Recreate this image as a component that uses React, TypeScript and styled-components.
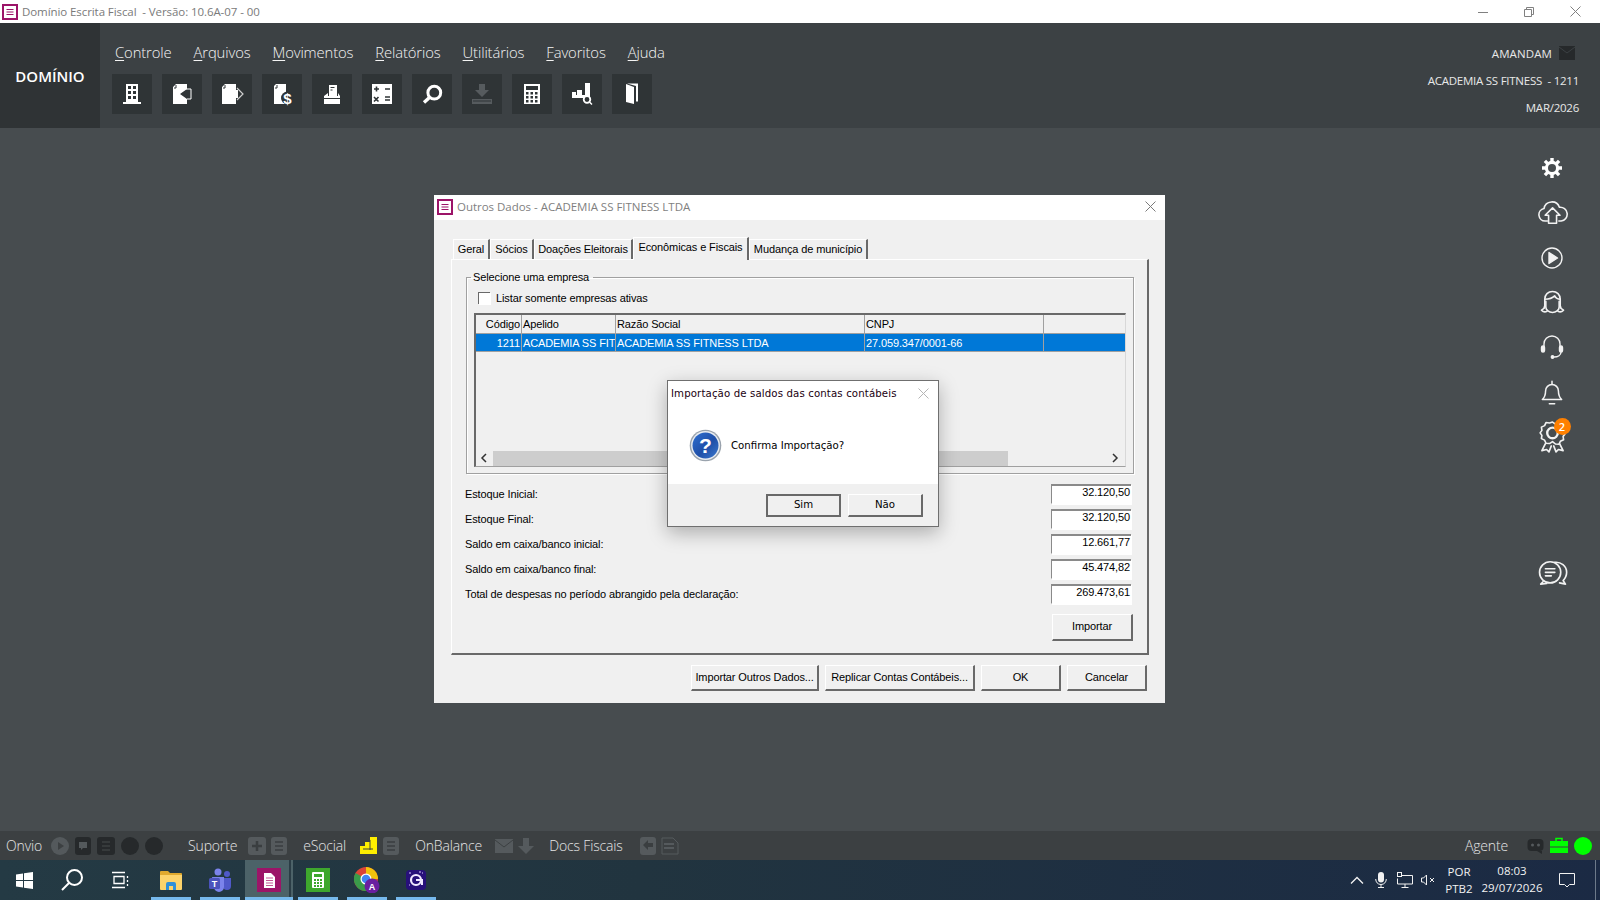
import React from 'react'
import styled, { createGlobalStyle } from 'styled-components'

const GlobalStyle = createGlobalStyle`
  html, body { margin: 0; padding: 0; }
  body { width: 1600px; height: 900px; overflow: hidden; background: #474c4f; font-family: "Open Sans", "Noto Sans", sans-serif; }
  * { box-sizing: border-box; }
`

const Page = styled.div`
  width: 1600px;
  height: 900px;
  display: flex;
  flex-direction: column;
  overflow: hidden;
`

/* app title bar */
const AppTitle = styled.div`
  height: 23px;
  background: #fff;
  display: flex;
  align-items: center;
  padding-left: 1px;
  flex: none;
`
const AppTitleText = styled.span`
  margin-left: 3px;
  font-size: 11.5px;
  color: #7a7a7a;
  white-space: pre;
  font-family: "Open Sans", sans-serif;
  letter-spacing: -0.08px;
`
const WinControls = styled.div`
  margin-left: auto;
  margin-right: 2px;
  display: flex;
  align-items: center;
  height: 21px;
`
const WinControl = styled.div`
  width: 46px;
  display: flex;
  justify-content: center;
  color: #808080;
`

/* dark header */
const Header = styled.header`
  height: 105px;
  flex: none;
  display: flex;
  background: #3c4144;
  color: #f4f4f4;
`
const Brand = styled.div`
  width: 100px;
  background: #2f3335;
  display: flex;
  align-items: center;
  justify-content: center;
  font-family: "Open Sans", sans-serif;
  font-size: 15px;
  font-weight: 600;
  color: #fff;
`
const HeaderMain = styled.div`
  padding: 17px 0 0 12px;
`
const Menu = styled.nav`
  display: flex;
  gap: 22px;
  margin-left: 3px;
  height: 23px;
  align-items: center;
  font-size: 14.8px;
  font-weight: 300;
  letter-spacing: -0.12px;
`
const MenuItem = styled.span`
  & > u { text-underline-offset: 2px; text-decoration-thickness: 1px; }
`
const Toolbar = styled.div`
  display: flex;
  gap: 10px;
  margin-top: 11px;
`
const ToolButton = styled.div`
  width: 40px;
  height: 40px;
  background: #2f3436;
  & > svg { display: block; }
`
const HeaderInfo = styled.div`
  margin-left: auto;
  padding: 16px 21px 0 0;
  display: flex;
  flex-direction: column;
  align-items: flex-end;
  font-size: 11.5px;
  font-weight: 400;
  letter-spacing: -0.25px;
`
const InfoRow = styled.div`
  height: 27px;
  display: flex;
  align-items: center;
  gap: 7px;
  white-space: pre;
  color: #e8e8e8;
`
const UserRow = styled(InfoRow)`
  height: 28px;
  margin-right: 4px;
  letter-spacing: 0.1px;
`

/* workspace */
const Workspace = styled.main`
  flex: 1;
  position: relative;
  background: #474c4f;
  display: flex;
  justify-content: flex-end;
`
const Rail = styled.aside`
  width: 96px;
  padding-top: 18px;
  display: flex;
  flex-direction: column;
  align-items: center;
`
const RailSlot = styled.div`
  height: 44.7px;
  display: flex;
  align-items: center;
  justify-content: center;
  position: relative;
`
const ChatSlot = styled(RailSlot)`
  margin-top: 92px;
`
const Badge = styled.span`
  position: absolute;
  top: 4px;
  right: -2px;
  width: 17px;
  height: 17px;
  border-radius: 50%;
  background: #ff8000;
  color: #fff;
  font-size: 11px;
  font-weight: 600;
  display: flex;
  align-items: center;
  justify-content: center;
`

/* main dialog */
const Dialog = styled.section`
  position: absolute;
  left: 434px;
  top: 67px;
  width: 731px;
  height: 508px;
  background: #f0f0f0;
  font-family: "Liberation Sans", Arial, sans-serif;
  font-size: 11px;
  letter-spacing: -0.12px;
  color: #000;
`
const DialogTitle = styled.div`
  height: 25px;
  background: #fff;
  display: flex;
  align-items: center;
  padding: 0 9px 2px 2px;
  color: #7f7f7f;
  font-family: "Open Sans", sans-serif;
  font-size: 11.5px;
  letter-spacing: -0.02px;
`
const DialogClose = styled.div`
  margin-left: auto;
  color: #7a7a7a;
  display: flex;
`
const DialogBody = styled.div`
  padding: 17px 16px 0 17px;
`
const TabStrip = styled.div`
  display: flex;
  height: 22px;
  align-items: flex-end;
  padding-left: 2px;
  position: relative;
  z-index: 1;
`
const Tab = styled.div<{ $w: number; $active?: boolean }>`
  width: ${(p) => p.$w}px;
  height: ${(p) => (p.$active ? 23 : 20)}px;
  margin-bottom: ${(p) => (p.$active ? -1 : 0)}px;
  background: #f0f0f0;
  border-top: 1px solid #fff;
  border-left: 1px solid #fff;
  border-right: 2px solid #696969;
  display: flex;
  align-items: center;
  justify-content: center;
  padding-bottom: ${(p) => (p.$active ? 4 : 2)}px;
  white-space: nowrap;
`
const TabPane = styled.div`
  height: 396px;
  border-top: 1px solid #fff;
  border-left: 1px solid #fff;
  border-right: 2px solid #696969;
  border-bottom: 2px solid #696969;
  padding: 11px 13px 0 14px;
`
const Group = styled.fieldset`
  margin: 0;
  padding: 0 7px 0 8px;
  height: 203px;
  border: 1px solid #a0a0a0;
  box-shadow: inset 1px 1px 0 #fff, 1px 1px 0 #fff;
`
const GroupLegend = styled.legend`
  padding: 0 4px 0 2px;
  margin-left: -4px;
  font-size: 11px;
  line-height: 13px;
`
const CheckRow = styled.label`
  display: flex;
  align-items: center;
  gap: 5px;
  margin: 7px 0 0 3px;
  height: 14px;
`
const CheckBox = styled.span`
  width: 12px;
  height: 12px;
  background: #fff;
  border-top: 1px solid #696969;
  border-left: 1px solid #696969;
  box-shadow: 1px 1px 0 #fff;
  margin-right: 1px;
`
const GridBox = styled.div`
  margin: 8px 0 0 -1px;
  height: 154px;
  border-top: 2px solid #696969;
  border-left: 2px solid #696969;
  border-bottom: 1px solid #a0a0a0;
  border-right: 1px solid #d8d8d8;
  display: flex;
  flex-direction: column;
`
const GridRow = styled.div<{ $selected?: boolean }>`
  display: grid;
  grid-template-columns: 46px 94px 249px 179px 1fr;
  height: ${(p) => (p.$selected ? 18 : 19)}px;
  flex: none;
  background: ${(p) => (p.$selected ? '#0078d7' : '#f0f0f0')};
  color: ${(p) => (p.$selected ? '#fff' : '#000')};
  border-bottom: 1px solid #a0a0a0;
`
const GridCell = styled.div<{ $right?: boolean }>`
  border-right: 1px solid #a0a0a0;
  padding: 0 1px;
  display: flex;
  align-items: center;
  justify-content: ${(p) => (p.$right ? 'flex-end' : 'flex-start')};
  white-space: nowrap;
  overflow: hidden;
  &:last-child { border-right: none; }
`
const GridFill = styled.div`
  flex: 1;
  background: #f0f0f0;
`
const HScroll = styled.div`
  height: 16px;
  flex: none;
  display: flex;
  align-items: center;
  background: #f0f0f0;
  justify-content: space-between;
  padding: 0 6px 0 4px;
  position: relative;
  color: #333;
`
const HThumb = styled.div`
  flex: none;
  width: 515px;
  height: 15px;
  background: #cdcdcd;
  margin: 0 auto 0 5px;
`
const ValueRows = styled.div`
  margin-top: 7px;
  padding-right: 3px;
`
const ValueRow = styled.div`
  height: 25px;
  display: flex;
  align-items: center;
  justify-content: space-between;
  margin-left: -1px;
`
const ValueBox = styled.div`
  width: 80px;
  height: 20px;
  background: #fff;
  border-top: 2px solid #8a8a8a;
  border-left: 1px solid #8a8a8a;
  border-bottom: 1px solid #fff;
  text-align: right;
  padding: 0 1px 0 0;
  line-height: 13px;
  box-shadow: 1px 1px 0 #fff;
`
const ImportRow = styled.div`
  display: flex;
  justify-content: flex-end;
  margin-top: 8px;
  margin-right: 1px;
`
const WinButton = styled.button<{ $w: number; $h?: number; $focus?: boolean }>`
  width: ${(p) => p.$w}px;
  height: ${(p) => p.$h ?? 26}px;
  padding: 0 0 2px;
  background: #f0f0f0;
  font: inherit;
  letter-spacing: inherit;
  color: #000;
  border: ${(p) => (p.$focus ? '2px solid #696969' : 'none')};
  border-top: ${(p) => (p.$focus ? '2px solid #696969' : '1px solid #fff')};
  border-left: ${(p) => (p.$focus ? '2px solid #696969' : '1px solid #fff')};
  border-right: 2px solid #696969;
  border-bottom: 2px solid #696969;
`
const FooterButtons = styled.div`
  display: flex;
  justify-content: flex-end;
  gap: 6px;
  margin-top: 10px;
  padding-right: 2px;
`

/* confirmation box over the dialog */
const MessageBox = styled.div`
  position: absolute;
  left: 233px;
  top: 185px;
  width: 272px;
  height: 147px;
  background: #fff;
  border: 1px solid #6f6f6f;
  box-shadow: 0 6px 18px rgba(0, 0, 0, 0.28);
  display: flex;
  flex-direction: column;
  font-family: "DejaVu Sans", Tahoma, sans-serif;
  font-size: 10.2px;
  letter-spacing: 0;
  color: #000;
`
const MessageTitle = styled.div`
  height: 25px;
  display: flex;
  align-items: center;
  padding: 0 9px 0 3px;
  color: #1a0010;
  letter-spacing: 0.12px;
`
const MessageContent = styled.div`
  flex: 1;
  display: flex;
  align-items: center;
  gap: 9px;
  padding: 0 0 0 21px;
`
const MessageFooter = styled.div`
  height: 42px;
  background: #f0f0f0;
  display: flex;
  justify-content: flex-end;
  align-items: flex-start;
  gap: 7px;
  padding: 10px 15px 0 0;
`

/* onvio status strip */
const StatusBar = styled.div`
  height: 29px;
  flex: none;
  background: #3c4042;
  display: flex;
  align-items: center;
  padding: 0 8px 0 6px;
  color: #e6e6e6;
  font-size: 14px;
  font-weight: 300;
  letter-spacing: -0.15px;
`
const StatusGroup = styled.div<{ $gap?: number; $left?: number }>`
  display: flex;
  align-items: center;
  gap: ${(p) => p.$gap ?? 5}px;
  margin-left: ${(p) => p.$left ?? 0}px;
  & > svg { display: block; flex: none; }
`
const StatusLabel = styled.span<{ $after?: number }>`
  margin-right: ${(p) => p.$after ?? 7}px;
`
const StatusEnd = styled(StatusGroup)`
  margin-left: auto;
`

/* windows taskbar */
const Taskbar = styled.footer`
  height: 40px;
  flex: none;
  background: linear-gradient(90deg, #243a44 0%, #21343f 40%, #1b2a44 100%);
  display: flex;
  align-items: stretch;
  color: #f2f2f2;
  font-size: 11.5px;
`
const SysSlot = styled.div`
  width: 48px;
  display: flex;
  align-items: center;
  justify-content: center;
`
const TaskApps = styled.div`
  display: flex;
  gap: 9px;
  margin-left: 7px;
`
const TaskApp = styled.div<{ $active?: boolean }>`
  width: ${(p) => (p.$active ? 48 : 40)}px;
  margin: 0 ${(p) => (p.$active ? -4 : 0)}px;
  display: flex;
  align-items: center;
  justify-content: ${(p) => (p.$active ? 'flex-start' : 'center')};
  padding-left: ${(p) => (p.$active ? 12 : 0)}px;
  border-bottom: 3px solid #76b9ed;
  background: ${(p) => (p.$active ? 'linear-gradient(90deg, #4c6268 0 44px, #2b3d46 44px 46px, #4c6268 46px)' : 'transparent')};
  & > svg { margin-top: 3px; }
`
const Tray = styled.div`
  margin-left: auto;
  display: flex;
`
const TraySlot = styled.div<{ $w: number }>`
  width: ${(p) => p.$w}px;
  display: flex;
  flex-direction: column;
  align-items: center;
  justify-content: center;
  line-height: 17px;
  white-space: nowrap;
`
const ClockSlot = styled(TraySlot)`
  padding-bottom: 2px;
`
const ShowDesktop = styled.div`
  width: 12px;
  margin-left: 0;
  & > div { width: 1px; height: 100%; margin-left: 7px; background: #6d7a8a; }
`

const Tile = ({ size = 18 }: { size?: number }) => (
  <svg width={size} height={size} viewBox="0 0 18 18" fill="none">
    <rect x="1" y="1" width="16" height="16" fill="#9c1468" />
    <rect x="3" y="3" width="12" height="12" fill="#fff" />
    <path d="M5.500 6.500h7M5.500 9h7M5.500 11.500h7" stroke="#9c1468" strokeWidth="1.200" />
  </svg>
)

const D = '#2f3436'
const ToolIcon = ({ kind }: { kind: number }) => {
  const icons: React.ReactNode[] = [
    <g key="0">
      <rect x="14" y="10" width="12" height="18" fill="#fff" />
      <rect x="11" y="28" width="18" height="2" fill="#fff" />
      {[16, 21].map((x) => [12, 17, 22].map((y) => <rect key={`${x}${y}`} x={x} y={y} width="3" height="3" fill={D} />))}
    </g>,
    <g key="1">
      <path d="M14 10h11v5l-7 5 7 5v5H11V13z" fill="#fff" />
      <path d="M14 11v3h-2" stroke={D} strokeWidth="1" fill="none" />
      <path d="M24 15h5v10h-4" stroke="#fff" strokeWidth="1" fill="none" />
    </g>,
    <g key="2">
      <path d="M13 10h11v6h2v8h-2v6H10V13z" fill="#fff" />
      <path d="M13 11v3h-2" stroke={D} strokeWidth="1" fill="none" />
      <path d="M25 14l6 6-6 6" stroke="#cfcfcf" strokeWidth="1.200" fill="none" />
    </g>,
    <g key="3">
      <path d="M14 10h10v20H12V12z" fill="#fff" />
      <path d="M15 11v3h-2" stroke={D} strokeWidth="1" fill="none" />
      <circle cx="25.500" cy="24" r="6.500" fill={D} />
      <text x="25.500" y="29.500" textAnchor="middle" fontFamily="Liberation Sans" fontWeight="700" fontSize="15" fill="#fff">$</text>
    </g>,
    <g key="4">
      <path d="M17 11h8v13h-8z" fill="#fff" />
      <path d="M18.500 13.500h4M18.500 16h2" stroke={D} strokeWidth="1" />
      <path d="M16 19v3h10v-3l2 3v8H12v-8z" fill="#fff" />
      <rect x="12" y="24" width="16" height="1" fill={D} />
    </g>,
    <g key="5">
      <rect x="10" y="10" width="20" height="20" fill="#fff" />
      <path d="M12 15h5M14.500 12.500v5M23 15h5M12 23l4.500 4.500M16.500 23L12 27.500M23 23h5M23 26h5" stroke={D} strokeWidth="1.600" />
    </g>,
    <g key="6">
      <circle cx="22.300" cy="18.700" r="6.400" stroke="#fff" strokeWidth="3" fill="none" />
      <path d="M17.500 23.500l-5.500 5" stroke="#fff" strokeWidth="3.400" />
    </g>,
    <g key="7" fill="#565b5e">
      <path d="M17 10h6v6h4l-7 7-7-7h4z" />
      <path d="M10 25h20v5H10z" />
      <rect x="11" y="26.500" width="18" height="1" fill={D} />
    </g>,
    <g key="8">
      <rect x="12" y="10" width="16" height="20" fill="#fff" />
      <rect x="14" y="12" width="12" height="4" fill={D} />
      {[14, 18.500, 23].map((x) => [18, 22, 26].map((y) => <rect key={`${x}${y}`} x={x} y={y} width="2.500" height="2.500" fill={D} />))}
    </g>,
    <g key="9" fill="#fff">
      <rect x="10" y="18" width="4" height="6" />
      <rect x="15" y="16" width="5" height="8" />
      <rect x="23" y="9" width="5" height="14" />
      <rect x="10" y="21" width="14" height="3" />
      <circle cx="25" cy="25.500" r="3.300" stroke="#fff" strokeWidth="1.800" fill={D} />
      <path d="M27.500 28l2.500 2.500" stroke="#fff" strokeWidth="1.500" />
    </g>,
    <g key="10">
      <path d="M14 10l8 3v17l-8-2z" fill="#fff" />
      <path d="M15 9.500h11v18h-2V12z" fill="#fff" />
    </g>,
  ]
  return (
    <svg width="40" height="40" viewBox="0 0 40 40" fill="none">
      {icons[kind]}
    </svg>
  )
}

const Rs = ({ children, size = 28 }: { children: React.ReactNode; size?: number }) => (
  <svg width={size} height={size} viewBox="0 0 28 28" fill="none" stroke="#f2f2f2" strokeWidth="1.400" strokeLinecap="round" strokeLinejoin="round">
    {children}
  </svg>
)

const GearIcon = () => (
  <svg width="24" height="24" viewBox="0 0 24 24" fill="none">
    <g stroke="#fff" strokeWidth="3.400">
      <path d="M12 2v20M2 12h20M4.900 4.900l14.200 14.200M19.100 4.900L4.900 19.100" />
    </g>
    <circle cx="12" cy="12" r="7.200" fill="#fff" />
    <circle cx="12" cy="12" r="4" fill="#474c4f" />
  </svg>
)

const QuestionIcon = () => (
  <svg width="33" height="33" viewBox="0 0 33 33">
    <defs>
      <linearGradient id="qb" x1="0" y1="0" x2="1" y2="1">
        <stop offset="0" stopColor="#2f6fd0" />
        <stop offset="0.55" stopColor="#1f4fa8" />
        <stop offset="1" stopColor="#3c79cf" />
      </linearGradient>
    </defs>
    <circle cx="16.500" cy="16.500" r="15.800" fill="#9aa3ad" />
    <circle cx="16.500" cy="16.500" r="14.400" fill="#e8ecf1" />
    <circle cx="16.500" cy="16.500" r="13" fill="url(#qb)" />
    <text x="16.500" y="24" textAnchor="middle" fontFamily="Liberation Sans" fontWeight="700" fontSize="21" fill="#fff">?</text>
  </svg>
)

const Ws = ({ w = 18, h = 18, children }: { w?: number; h?: number; children: React.ReactNode }) => (
  <svg width={w} height={h} viewBox={`0 0 ${w} ${h}`} fill="none">
    {children}
  </svg>
)

const ListTile = () => (
  <Ws w={16} h={18}>
    <rect width="16" height="18" rx="3" fill="#555a5d" />
    <path d="M4 5h8M4 9h8M4 13h8" stroke="#3a3e40" strokeWidth="1.500" />
  </Ws>
)

const menuItems = ['Controle', 'Arquivos', 'Movimentos', 'Relatórios', 'Utilitários', 'Favoritos', 'Ajuda']
const tabs: [string, number][] = [
  ['Geral', 37],
  ['Sócios', 44],
  ['Doações Eleitorais', 99],
  ['Econômicas e Fiscais', 116],
  ['Mudança de município', 119],
]
const values: [string, string][] = [
  ['Estoque Inicial:', '32.120,50'],
  ['Estoque Final:', '32.120,50'],
  ['Saldo em caixa/banco inicial:', '12.661,77'],
  ['Saldo em caixa/banco final:', '45.474,82'],
  ['Total de despesas no período abrangido pela declaração:', '269.473,61'],
]

export default function App() {
  return (
    <Page>
      <GlobalStyle />
      <AppTitle>
        <Tile />
        <AppTitleText>{'Domínio Escrita Fiscal  - Versão: 10.6A-07 - 00'}</AppTitleText>
        <WinControls>
          <WinControl>
            <svg width="10" height="10" viewBox="0 0 10 10"><path d="M0 5.500h10" stroke="currentColor" /></svg>
          </WinControl>
          <WinControl>
            <svg width="10" height="10" viewBox="0 0 10 10" fill="none" stroke="currentColor"><path d="M.500 2.500h7v7h-7zM2.500 2.500v-2h7v7h-2" /></svg>
          </WinControl>
          <WinControl>
            <svg width="11" height="11" viewBox="0 0 11 11"><path d="M.500.500l10 10M10.500.500l-10 10" stroke="currentColor" /></svg>
          </WinControl>
        </WinControls>
      </AppTitle>

      <Header>
        <Brand>DOMÍNIO</Brand>
        <HeaderMain>
          <Menu>
            {menuItems.map((m) => (
              <MenuItem key={m}>
                <u>{m[0]}</u>
                {m.slice(1)}
              </MenuItem>
            ))}
          </Menu>
          <Toolbar>
            {Array.from({ length: 11 }, (_, i) => (
              <ToolButton key={i}>
                <ToolIcon kind={i} />
              </ToolButton>
            ))}
          </Toolbar>
        </HeaderMain>
        <HeaderInfo>
          <UserRow>
            AMANDAM
            <svg width="16" height="14" viewBox="0 0 16 14">
              <rect width="16" height="14" fill="#26292b" />
              <path d="M0 1l8 6 8-6" stroke="#3c4144" strokeWidth="1" fill="none" />
            </svg>
          </UserRow>
          <InfoRow>{'ACADEMIA SS FITNESS  - 1211'}</InfoRow>
          <InfoRow>MAR/2026</InfoRow>
        </HeaderInfo>
      </Header>

      <Workspace>
        <Dialog>
          <DialogTitle>
            <Tile />
            <span>&nbsp;Outros Dados - ACADEMIA SS FITNESS LTDA</span>
            <DialogClose>
              <svg width="11" height="11" viewBox="0 0 11 11"><path d="M.500.500l10 10M10.500.500l-10 10" stroke="currentColor" /></svg>
            </DialogClose>
          </DialogTitle>
          <DialogBody>
            <TabStrip>
              {tabs.map(([t, w], i) => (
                <Tab key={t} $w={w} $active={i === 3}>
                  {t}
                </Tab>
              ))}
            </TabStrip>
            <TabPane>
              <Group>
                <GroupLegend>Selecione uma empresa</GroupLegend>
                <CheckRow>
                  <CheckBox />
                  Listar somente empresas ativas
                </CheckRow>
                <GridBox>
                  <GridRow>
                    <GridCell $right>Código</GridCell>
                    <GridCell>Apelido</GridCell>
                    <GridCell>Razão Social</GridCell>
                    <GridCell>CNPJ</GridCell>
                    <GridCell />
                  </GridRow>
                  <GridRow $selected>
                    <GridCell $right>1211</GridCell>
                    <GridCell>ACADEMIA SS FIT</GridCell>
                    <GridCell>ACADEMIA SS FITNESS LTDA</GridCell>
                    <GridCell>27.059.347/0001-66</GridCell>
                    <GridCell />
                  </GridRow>
                  <GridFill />
                  <HScroll>
                    <svg width="8" height="10" viewBox="0 0 8 10" fill="none"><path d="M6 1L2 5l4 4" stroke="currentColor" strokeWidth="1.500" /></svg>
                    <HThumb />
                    <svg width="8" height="10" viewBox="0 0 8 10" fill="none"><path d="M2 1l4 4-4 4" stroke="currentColor" strokeWidth="1.500" /></svg>
                  </HScroll>
                </GridBox>
              </Group>
              <ValueRows>
                {values.map(([label, value]) => (
                  <ValueRow key={label}>
                    <span>{label}</span>
                    <ValueBox>{value}</ValueBox>
                  </ValueRow>
                ))}
              </ValueRows>
              <ImportRow>
                <WinButton $w={81} $h={27}>Importar</WinButton>
              </ImportRow>
            </TabPane>
            <FooterButtons>
              <WinButton $w={128}>Importar Outros Dados...</WinButton>
              <WinButton $w={150}>Replicar Contas Contábeis...</WinButton>
              <WinButton $w={80}>OK</WinButton>
              <WinButton $w={80}>Cancelar</WinButton>
            </FooterButtons>
          </DialogBody>

          <MessageBox>
            <MessageTitle>
              Importação de saldos das contas contábeis
              <DialogClose>
                <svg width="11" height="11" viewBox="0 0 11 11"><path d="M.500.500l10 10M10.500.500l-10 10" stroke="#b5b5b5" /></svg>
              </DialogClose>
            </MessageTitle>
            <MessageContent>
              <QuestionIcon />
              Confirma Importação?
            </MessageContent>
            <MessageFooter>
              <WinButton $w={75} $h={23} $focus>Sim</WinButton>
              <WinButton $w={75} $h={23}>Não</WinButton>
            </MessageFooter>
          </MessageBox>
        </Dialog>

        <Rail>
          <RailSlot><GearIcon /></RailSlot>
          <RailSlot>
            <Rs size={32}>
              <path d="M10 21H8a5.500 5.500 0 0 1-1-10.900A7 7 0 0 1 20.500 9 6 6 0 0 1 22 21h-2" />
              <path d="M11 23v-7H8l6.500-6.500L21 16h-3v7z" />
            </Rs>
          </RailSlot>
          <RailSlot>
            <Rs>
              <circle cx="14" cy="14" r="10" />
              <path d="M11 8.500l8.500 5.500-8.500 5.500z" fill="#f2f2f2" />
            </Rs>
          </RailSlot>
          <RailSlot>
            <Rs size={31}>
              <path d="M7 19V11c0-4 3-7 7-7s7 3 7 7v8" />
              <path d="M7 11c3 0 7-1 9-3 1 2 3 3 5 3" />
              <path d="M8 13v5c0 3 3 5 6 5s6-2 6-5v-5" />
              <path d="M7 17c0 2-1 3-3 4 1 1 3 2 5 1M21 17c0 2 1 3 3 4-1 1-3 2-5 1" />
            </Rs>
          </RailSlot>
          <RailSlot>
            <Rs>
              <path d="M6 15v-4a8 8 0 0 1 16 0v4" />
              <rect x="3.500" y="13" width="3" height="6" rx="1.500" fill="#f2f2f2" />
              <rect x="21.500" y="13" width="3" height="6" rx="1.500" fill="#f2f2f2" />
              <path d="M23 19c0 3-3 5-7 5" />
              <circle cx="14.500" cy="24" r="1.200" fill="#f2f2f2" />
            </Rs>
          </RailSlot>
          <RailSlot>
            <Rs size={30}>
              <path d="M5 21c2-2 3-4 3-8a6 6 0 0 1 12 0c0 4 1 6 3 8z" />
              <path d="M14 7V4M11.500 25h5" />
            </Rs>
          </RailSlot>
          <RailSlot>
            <Rs size={33}>
              <path d="M14 3l2.500 1.800 3-.3 1.200 2.800 2.700 1.400-.4 3 1.500 2.300-1.500 2.300.4 3-2.700 1.400-1.200 2.800-3-.3L14 21l-2.500 1.800-3-.3-1.200-2.800L4.600 18.300l.4-3-1.500-2.300L5 10.700l-.4-3 2.700-1.400L8.500 3.500l3 .3z" transform="translate(0 -1) scale(1 0.92)" />
              <circle cx="14" cy="11" r="4.500" strokeWidth="2" />
              <path d="M8 20l-3 6 4-1 2 2 2-5M20 20l3 6-4-1-2 2-2-5" />
            </Rs>
            <Badge>2</Badge>
          </RailSlot>
          <ChatSlot>
            <Rs size={33}>
              <circle cx="12" cy="13" r="9" />
              <path d="M6 21l-2 2 5-.5M8 10h8M8 13h8M8 16h5" />
              <path d="M16 4.500c5-.5 10 3 10 8.500 0 3-1 5-3 7l2 3-5-1" />
            </Rs>
          </ChatSlot>
        </Rail>
      </Workspace>

      <StatusBar>
        <StatusGroup $gap={6}>
          <StatusLabel $after={3}>Onvio</StatusLabel>
          <Ws><circle cx="9" cy="9" r="9" fill="#54595c" /><path d="M7 5l6 4-6 4z" fill="#3c4042" /></Ws>
          <Ws w={16}><rect width="16" height="18" rx="3" fill="#26292b" /><path d="M4 5h8v6H8l-2 2v-2H4z" fill="#54595c" /></Ws>
          <Ws><rect width="18" height="18" rx="3" fill="#26292b" /><path d="M5 5h8M5 9h8M5 13h8" stroke="#3c4042" strokeWidth="1.500" /></Ws>
          <Ws><circle cx="9" cy="9" r="9" fill="#26292b" /></Ws>
          <Ws><circle cx="9" cy="9" r="9" fill="#26292b" /></Ws>
        </StatusGroup>
        <StatusGroup $left={25}>
          <StatusLabel $after={6}>Suporte</StatusLabel>
          <Ws><rect width="18" height="18" rx="3" fill="#555a5d" /><path d="M9 4v10M4 9h10" stroke="#3a3e40" strokeWidth="2.500" /></Ws>
          <ListTile />
        </StatusGroup>
        <StatusGroup $left={16}>
          <StatusLabel $after={9}>eSocial</StatusLabel>
          <Ws><path d="M10 0h7v17H0V9h5V5h5z" fill="#ffee00" /><path d="M3 12h10M10 3v10" stroke="#3c4042" /></Ws>
          <ListTile />
        </StatusGroup>
        <StatusGroup $left={16}>
          <StatusLabel $after={8}>OnBalance</StatusLabel>
          <Ws><rect y="2" width="18" height="14" fill="#555a5d" /><path d="M0 3l9 7 9-7" stroke="#3c4042" fill="none" /></Ws>
          <Ws w={16}><path d="M5 1h6v8h5l-8 8-8-8h5z" fill="#555a5d" /></Ws>
        </StatusGroup>
        <StatusGroup $left={15}>
          <StatusLabel $after={12}>Docs Fiscais</StatusLabel>
          <Ws w={16}><rect width="16" height="18" rx="3" fill="#555a5d" /><path d="M13 6H8V3L3 8l5 5v-3h5z" fill="#3a3e40" /></Ws>
          <Ws><path d="M1 1h11l5 5v11H1z" stroke="#555a5d" /><path d="M3 7h10M3 11h10" stroke="#555a5d" strokeWidth="2" /></Ws>
        </StatusGroup>
        <StatusEnd $gap={6}>
          <StatusLabel $after={13}>Agente</StatusLabel>
          <Ws w={17}>
            <rect x="0.500" y="2" width="16" height="12" rx="4" fill="#26292b" />
            <circle cx="5.500" cy="8" r="1.500" fill="#555a5d" />
            <circle cx="11.500" cy="8" r="1.500" fill="#555a5d" />
            <path d="M10 14h5v3z" fill="#26292b" />
          </Ws>
          <Ws>
            <path d="M6 4V1.500h6V4" stroke="#00ff00" strokeWidth="1.500" />
            <rect y="4" width="18" height="5.500" fill="#00ff00" />
            <rect y="10.500" width="18" height="5.500" fill="#00ff00" />
          </Ws>
          <Ws><circle cx="9" cy="9" r="9" fill="#00ff00" /></Ws>
        </StatusEnd>
      </StatusBar>

      <Taskbar>
        <SysSlot>
          <svg width="17" height="17" viewBox="0 0 17 17" fill="#fff">
            <path d="M0 2.500l7-1v6.500H0zM8 1.300L17 0v8H8zM0 9h7v6.500l-7-1zM8 9h9v8l-9-1.300z" />
          </svg>
        </SysSlot>
        <SysSlot>
          <svg width="24" height="24" viewBox="0 0 24 24" fill="none" stroke="#fff" strokeWidth="2">
            <circle cx="14.500" cy="9.500" r="7.500" />
            <path d="M9 15l-7 7" />
          </svg>
        </SysSlot>
        <SysSlot>
          <svg width="17" height="18" viewBox="0 0 17 18" fill="none" stroke="#fff" strokeWidth="1.300">
            <path d="M0 1.500h13M2 5.500h10v7H2zM0 16.500h13M15.500 5v2M15.500 9v2M15.500 13v2" />
          </svg>
        </SysSlot>
        <TaskApps>
          <TaskApp>
            <svg width="22" height="20" viewBox="0 0 22 20">
              <path d="M0 2a1 1 0 0 1 1-1h7l2 2h11a1 1 0 0 1 1 1v3H0z" fill="#e0a92e" />
              <path d="M0 5h22v14a1 1 0 0 1-1 1H1a1 1 0 0 1-1-1z" fill="#fcd36b" />
              <path d="M6 20v-6a2 2 0 0 1 2-2h6a2 2 0 0 1 2 2v6h-3v-4H9v4z" fill="#2f8fd8" />
            </svg>
          </TaskApp>
          <TaskApp>
            <svg width="24" height="24" viewBox="0 0 24 24">
              <circle cx="10" cy="4" r="3.500" fill="#7b83eb" />
              <circle cx="19" cy="6" r="3" fill="#5059c9" />
              <path d="M15 10h8v8a4 4 0 0 1-8 0z" fill="#5059c9" />
              <path d="M4 9h12v10a5 5 0 0 1-10 0z" fill="#7b83eb" />
              <rect x="1" y="10" width="11" height="11" rx="1.500" fill="#4b53bc" />
              <text x="6.500" y="19" textAnchor="middle" fontFamily="Liberation Sans" fontWeight="700" fontSize="9" fill="#fff">T</text>
            </svg>
          </TaskApp>
          <TaskApp $active>
            <svg width="24" height="24" viewBox="0 0 24 24">
              <rect width="24" height="24" fill="#9c1468" />
              <path d="M7 5h7l4 4v11H7z" fill="#fff" />
              <path d="M9 10h7M9 12.500h7M9 15h7M9 17.500h7" stroke="#c25a95" strokeWidth="1.200" />
            </svg>
          </TaskApp>
          <TaskApp>
            <svg width="24" height="24" viewBox="0 0 24 24">
              <rect width="24" height="24" fill="#3ea72d" />
              <rect x="6" y="4" width="12" height="16" rx="1" fill="#fff" />
              <rect x="8" y="6" width="8" height="3" fill="#3ea72d" />
              {[8, 11, 14].map((x) => [11, 14, 17].map((y) => <rect key={`${x}${y}`} x={x} y={y} width="2" height="2" fill="#3ea72d" />))}
            </svg>
          </TaskApp>
          <TaskApp>
            <svg width="26" height="26" viewBox="0 0 26 26">
              <circle cx="12" cy="12" r="12" fill="#db4437" />
              <path d="M12 12L1.600 6A12 12 0 0 0 12 24l6-10.400z" fill="#3a9b4a" />
              <path d="M12 0A12 12 0 0 1 24 12H12z" fill="#f4c20d" />
              <circle cx="12" cy="12" r="5.500" fill="#fff" />
              <circle cx="12" cy="12" r="4.300" fill="#4285f4" />
              <circle cx="18" cy="19" r="7.500" fill="#6a1fa0" />
              <text x="18" y="22.500" textAnchor="middle" fontFamily="Liberation Sans" fontWeight="700" fontSize="9" fill="#fff">A</text>
            </svg>
          </TaskApp>
          <TaskApp>
            <svg width="20" height="20" viewBox="0 0 20 20">
              <rect width="20" height="20" rx="4" fill="#27107a" />
              <circle cx="10" cy="10" r="5" fill="none" stroke="#f0e8ff" strokeWidth="2.200" />
              <path d="M10 10h6v5" stroke="#f0e8ff" strokeWidth="2" fill="none" />
              <path d="M3 3h2M16 3h1M3 15h1M14 1v2" stroke="#d9c6ff" />
            </svg>
          </TaskApp>
        </TaskApps>
        <Tray>
          <TraySlot $w={24}>
            <svg width="14" height="8" viewBox="0 0 14 8" fill="none" stroke="#f2f2f2" strokeWidth="1.300"><path d="M1 7.500l6-6 6 6" /></svg>
          </TraySlot>
          <TraySlot $w={23}>
            <svg width="12" height="16" viewBox="0 0 12 16" fill="none">
              <rect x="3" y="0" width="6" height="10.500" rx="3" fill="#f2f2f2" />
              <path d="M.700 7c0 3 2 5.500 5.300 5.500S11.300 10 11.300 7M6 12.500V15M3 15.500h6" stroke="#f2f2f2" />
            </svg>
          </TraySlot>
          <TraySlot $w={25}>
            <svg width="16" height="16" viewBox="0 0 16 16" fill="none" stroke="#f2f2f2">
              <path d="M3 3.500h12.500v8.500H.500V6.500M8 12v3M4.500 15.500h7" />
              <rect x=".500" y=".500" width="4" height="4" fill="#1d2d42" />
            </svg>
          </TraySlot>
          <TraySlot $w={23}>
            <svg width="15" height="12" viewBox="0 0 15 12" fill="none" stroke="#f2f2f2">
              <path d="M.500 4v4h2l3 3V1l-3 3zM9 4l4 4M13 4l-4 4" />
            </svg>
          </TraySlot>
          <TraySlot $w={38}>
            <span>POR</span>
            <span>PTB2</span>
          </TraySlot>
          <ClockSlot $w={68}>
            <span>08:03</span>
            <span>29/07/2026</span>
          </ClockSlot>
          <TraySlot $w={42}>
            <svg width="16" height="15" viewBox="0 0 16 15" fill="none" stroke="#f2f2f2">
              <path d="M.500.500h15v11h-5l-2.500 2.500-2.500-2.500h-5z" />
            </svg>
          </TraySlot>
          <ShowDesktop><div /></ShowDesktop>
        </Tray>
      </Taskbar>
    </Page>
  )
}
